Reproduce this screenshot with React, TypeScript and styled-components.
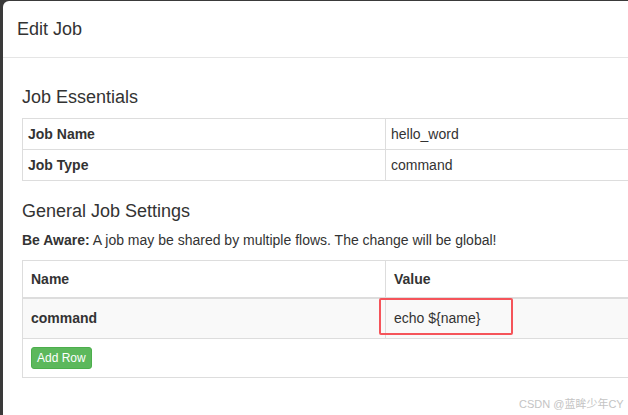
import React from "react";
import styled, { createGlobalStyle } from "styled-components";

const Global = createGlobalStyle`
  html, body { margin: 0; padding: 0; }
  body {
    background: #3a3a3a;
    width: 628px;
    height: 415px;
    overflow: hidden;
    font-family: "Liberation Sans", Arial, Helvetica, sans-serif;
    font-size: 14px;
    line-height: 20px;
    color: #333;
  }
`;

const Stage = styled.div`
  position: relative;
  width: 628px;
  height: 415px;
  overflow: hidden;
  padding: 1px 0 0 3px;
  box-sizing: border-box;
`;

const Modal = styled.div`
  width: 800px;
  height: 480px;
  background: #fff;
  border-radius: 6px;
`;

const Header = styled.div`
  height: 56px;
  box-sizing: content-box;
  border-bottom: 1px solid #e5e5e5;
  display: flex;
  align-items: center;
  padding: 0 14px;
`;

const Title = styled.h4`
  margin: 0;
  font-size: 18px;
  font-weight: normal;
  line-height: 20px;
  color: #333;
`;

const Body = styled.div`
  padding: 29px 0 0 19px;
  display: flex;
  flex-direction: column;
`;

const Section = styled.h4<{ $mb?: number }>`
  margin: 0 0 ${(p) => p.$mb ?? 11}px;
  font-size: 18px;
  font-weight: normal;
  line-height: 20px;
  color: #333;
`;

const Table = styled.div<{ $gap?: number }>`
  display: grid;
  grid-template-columns: 362px 1fr;
  border: 1px solid #ddd;
  border-bottom: none;
  margin-bottom: ${(p) => p.$gap ?? 0}px;
`;

const Cell = styled.div<{ $pad: string; $bold?: boolean; $bg?: string; $thick?: boolean; $first?: boolean; $span?: boolean }>`
  position: relative;
  padding: ${(p) => p.$pad};
  font-weight: ${(p) => (p.$bold ? "bold" : "normal")};
  background: ${(p) => p.$bg ?? "transparent"};
  border-bottom: ${(p) => (p.$thick ? "2px" : "1px")} solid #ddd;
  border-left: ${(p) => (p.$first ? "none" : "1px solid #ddd")};
  grid-column: ${(p) => (p.$span ? "1 / span 2" : "auto")};
  display: flex;
  align-items: center;
`;

const Note = styled.p`
  margin: 9px 0 10px;
  font-size: 14px;
  line-height: 20px;
`;

const AddButton = styled.button`
  font-family: "Liberation Sans", Arial, Helvetica, sans-serif;
  font-size: 12px;
  line-height: 18px;
  padding: 1px 5px;
  color: #fff;
  background: #5cb85c;
  border: 1px solid #4cae4c;
  border-radius: 3px;
  cursor: pointer;
`;

const Highlight = styled.div`
  position: absolute;
  left: -7px;
  top: -1px;
  width: 134px;
  height: 37px;
  box-sizing: border-box;
  border: 2px solid #f5545a;
  border-radius: 2px;
  pointer-events: none;
`;

const Watermark = styled.div`
  position: absolute;
  left: 519px;
  top: 397px;
  white-space: nowrap;
  font-size: 11px;
  line-height: 15px;
  color: #c4c4c4;
  font-family: "Liberation Sans", Arial, "Noto Sans CJK SC", sans-serif;
`;

export default function App() {
  return (
    <>
      <Global />
      <Stage>
        <Modal>
          <Header>
            <Title>Edit Job</Title>
          </Header>
          <Body>
            <Section>Job Essentials</Section>
            <Table $gap={20}>
              <Cell $pad="5px" $bold $first>Job Name</Cell>
              <Cell $pad="5px">hello_word</Cell>
              <Cell $pad="5px" $bold $first>Job Type</Cell>
              <Cell $pad="5px">command</Cell>
            </Table>
            <Section $mb={0}>General Job Settings</Section>
            <Note>
              <b>Be Aware:</b> A job may be shared by multiple flows. The change will be global!
            </Note>
            <Table>
              <Cell $pad="8px" $bold $first $thick>Name</Cell>
              <Cell $pad="8px" $bold $thick>Value</Cell>
              <Cell $pad="9px 8px 10px" $bold $first $bg="#f9f9f9">command</Cell>
              <Cell $pad="9px 8px 10px" $bg="#f9f9f9">
                echo {"${name}"}
                <Highlight />
              </Cell>
              <Cell $pad="8px" $first $span>
                <AddButton>Add Row</AddButton>
              </Cell>
            </Table>
          </Body>
        </Modal>
        <Watermark>CSDN @蓝眸少年CY</Watermark>
      </Stage>
    </>
  );
}
